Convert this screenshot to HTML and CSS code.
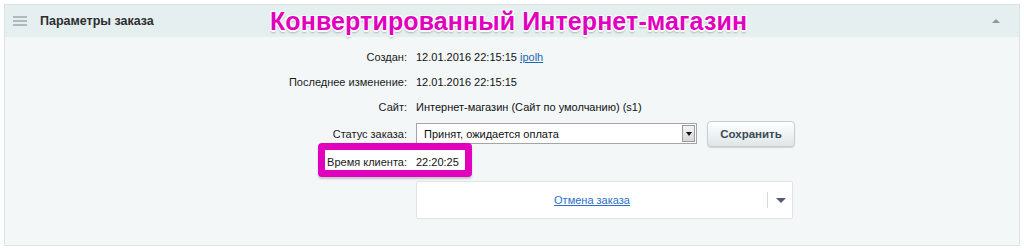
FILE: index.html
```html
<!DOCTYPE html>
<html lang="ru">
<head>
    <meta charset="UTF-8">
    <title>Параметры заказа</title>
    <link rel="stylesheet" href="styles.css">
</head>
<body>
    <div class="panel">
        <div class="panel-head">
            <span class="burger"><i></i><i></i><i></i></span>
            <span class="panel-title">Параметры заказа</span>
            <span class="promo">Конвертированный Интернет-магазин</span>
            <span class="collapse"></span>
        </div>
        <div class="panel-body">
            <div class="row">
                <div class="label">Создан:</div>
                <div class="value">12.01.2016 22:15:15 <a href="#">ipolh</a></div>
            </div>
            <div class="row">
                <div class="label">Последнее изменение:</div>
                <div class="value">12.01.2016 22:15:15</div>
            </div>
            <div class="row">
                <div class="label">Сайт:</div>
                <div class="value">Интернет-магазин (Сайт по умолчанию) (s1)</div>
            </div>
            <div class="row row-status">
                <div class="label">Статус заказа:</div>
                <div class="value">
                    <div class="select">
                        <span>Принят, ожидается оплата</span>
                        <span class="select-btn"></span>
                    </div>
                    <button class="btn-save">Сохранить</button>
                </div>
            </div>
            <div class="row row-time">
                <div class="highlight"></div>
                <div class="label">Время клиента:</div>
                <div class="value">22:20:25</div>
            </div>
            <div class="row row-cancel">
                <div class="label"></div>
                <div class="value">
                    <div class="cancel-box">
                        <a href="#" class="cancel-link">Отмена заказа</a>
                        <span class="cancel-sep"></span>
                        <span class="cancel-arrow"></span>
                    </div>
                </div>
            </div>
        </div>
    </div>
</body>
</html>
```

FILE: styles.css
```css
body {
    margin: 0;
    padding: 4px 4px 0 4px;
    background-color: #ffffff;
    font-family: "Liberation Sans", Arial, sans-serif;
    font-size: 11px;
    color: #000;
}
.panel {
    border: 1px solid #dbe3e6;
    background-color: #f4f7f8;
    width: 1016px;
    height: 242px;
    box-sizing: border-box;
}
.panel-head {
    position: relative;
    display: flex;
    align-items: center;
    height: 32px;
    background-color: #e6eff0;
    padding-left: 8px;
}
.burger {
    display: flex;
    flex-direction: column;
    gap: 2px;
    width: 14px;
    margin-right: 13px;
}
.burger i {
    display: block;
    height: 2px;
    background-color: #adb9bb;
}
.panel-title {
    font-size: 12.5px;
    font-weight: bold;
    color: #2d2d2d;
}
.promo {
    position: absolute;
    left: 265px;
    top: 2px;
    font-size: 25px;
    font-weight: bold;
    color: #e100be;
    letter-spacing: 0.1px;
    text-shadow: -1px -1px 0 #fff, 1px -1px 0 #fff, -1px 1px 0 #fff, 1px 1px 0 #fff,
        0 2px 0 #fff, 0 3px 2px rgba(0, 0, 0, 0.25);
}
.collapse {
    position: absolute;
    right: 19px;
    top: 14px;
    width: 0;
    height: 0;
    border-left: 4px solid transparent;
    border-right: 4px solid transparent;
    border-bottom: 4px solid #8c999b;
}
.panel-body {
    padding-top: 7px;
}
.row {
    position: relative;
    display: grid;
    grid-template-columns: 402px 1fr;
    column-gap: 9px;
    height: 25px;
    align-items: center;
}
.label {
    grid-column: 1;
    text-align: right;
    color: #1a1a1a;
}
.value {
    grid-column: 2;
    color: #111;
}
.value a {
    color: #2067b0;
}
.row-status {
    height: 29px;
}
.row-status .value {
    display: flex;
    align-items: center;
    gap: 10px;
}
.select {
    display: flex;
    align-items: center;
    justify-content: space-between;
    width: 281px;
    height: 21px;
    box-sizing: border-box;
    border: 1px solid #a5a5a5;
    background-color: #fff;
    padding-left: 7px;
}
.select-btn {
    position: relative;
    width: 13px;
    height: 17px;
    margin-right: 1px;
    border: 1px solid #9a9a9a;
    background: linear-gradient(#f4f4f4, #d6d6d6);
    box-sizing: border-box;
}
.select-btn::after {
    content: "";
    position: absolute;
    left: 3px;
    top: 6px;
    border-left: 3px solid transparent;
    border-right: 3px solid transparent;
    border-top: 4px solid #111;
}
.btn-save {
    width: 88px;
    height: 26px;
    border: 1px solid #c5ced1;
    border-radius: 4px;
    background: linear-gradient(#ffffff, #dfe6e8);
    box-shadow: 0 1px 1px rgba(0, 0, 0, 0.15);
    font-family: "Liberation Sans", Arial, sans-serif;
    font-size: 11.5px;
    font-weight: bold;
    color: #3a4a55;
    cursor: pointer;
}
.row-time {
    height: 28px;
}
.row-time .label,
.row-time .value {
    position: relative;
    z-index: 1;
}
.highlight {
    position: absolute;
    left: 313px;
    top: -5px;
    width: 154px;
    height: 34px;
    box-sizing: border-box;
    border: 7px solid #e100be;
    border-radius: 4px;
    background-color: #fff;
    box-shadow: 0 2px 2px rgba(0, 0, 0, 0.2);
}
.row-cancel {
    height: 38px;
    margin-top: 5px;
}
.cancel-box {
    display: flex;
    align-items: center;
    width: 377px;
    height: 38px;
    box-sizing: border-box;
    border: 1px solid #dfe5e7;
    border-radius: 2px;
    background-color: #fff;
}
.cancel-link {
    flex: 1;
    text-align: center;
}
.value .cancel-link {
    color: #2e6fc7;
}
.cancel-sep {
    width: 1px;
    height: 16px;
    background-color: #d3d9db;
    margin-right: 8px;
}
.cancel-arrow {
    width: 0;
    height: 0;
    border-left: 5px solid transparent;
    border-right: 5px solid transparent;
    border-top: 5px solid #535c69;
    margin-right: 6px;
}
```
